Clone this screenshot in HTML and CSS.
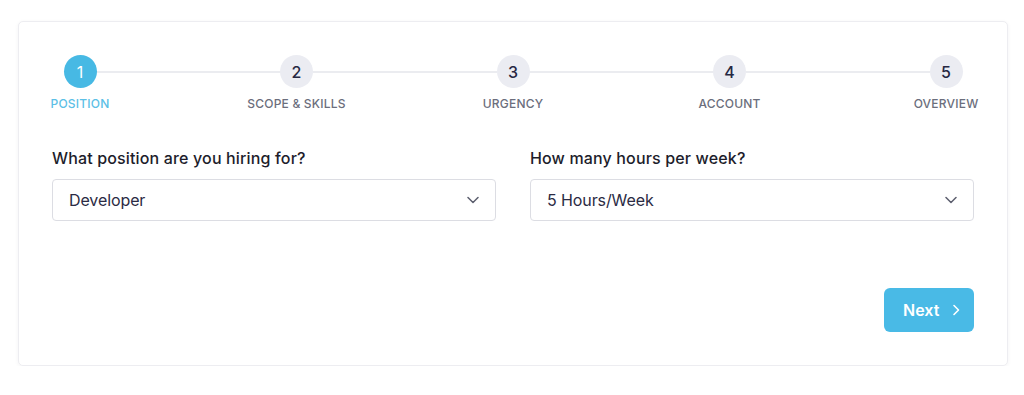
FILE: index.html
```html
<!DOCTYPE html>
<html>
<head>
<meta charset="utf-8">
<link rel="stylesheet" href="styles.css">
</head>
<body>
<div class="page">
  <div class="card">
    <div class="steps">
      <div class="step active"><div class="circle">1</div><div class="label">Position</div></div>
      <div class="connector"></div>
      <div class="step"><div class="circle">2</div><div class="label">Scope &amp; Skills</div></div>
      <div class="connector"></div>
      <div class="step"><div class="circle">3</div><div class="label">Urgency</div></div>
      <div class="connector"></div>
      <div class="step"><div class="circle">4</div><div class="label">Account</div></div>
      <div class="connector"></div>
      <div class="step"><div class="circle">5</div><div class="label">Overview</div></div>
    </div>
    <div class="form">
      <div class="field">
        <div class="field-label">What position are you hiring for?</div>
        <div class="select"><span>Developer</span>
          <svg class="chev" width="12" height="8" viewBox="0 0 12 8"><path d="M1 1.5 L6 6.5 L11 1.5" fill="none" stroke="#5c5f6e" stroke-width="1.5" stroke-linecap="round" stroke-linejoin="round"/></svg>
        </div>
      </div>
      <div class="field">
        <div class="field-label">How many hours per week?</div>
        <div class="select"><span>5 Hours/Week</span>
          <svg class="chev" width="12" height="8" viewBox="0 0 12 8"><path d="M1 1.5 L6 6.5 L11 1.5" fill="none" stroke="#5c5f6e" stroke-width="1.5" stroke-linecap="round" stroke-linejoin="round"/></svg>
        </div>
      </div>
    </div>
    <div class="actions">
      <button class="next">Next
        <svg width="8" height="12" viewBox="0 0 8 12"><path d="M2 1.5 L6.5 6 L2 10.5" fill="none" stroke="#ffffff" stroke-width="1.6" stroke-linecap="round" stroke-linejoin="round"/></svg>
      </button>
    </div>
  </div>
</div>
</body>
</html>
```
FILE: styles.css
```css
html, body {
  margin: 0;
  padding: 0;
  background: #ffffff;
  font-family: Inter, "Noto Sans", "Liberation Sans", sans-serif;
}
.page {
  padding: 21px 16px 0 18px;
}
.card {
  box-sizing: border-box;
  width: 990px;
  border: 1px solid #ededf1;
  border-radius: 5px;
  box-shadow: 0 1px 4px rgba(30, 30, 60, 0.05);
  background: #fff;
  padding: 33px 33px 33px 33px;
}
.steps {
  display: flex;
  align-items: flex-start;
}
.step {
  width: 56px;
  flex: none;
  display: flex;
  flex-direction: column;
  align-items: center;
}
.connector {
  flex: 1;
  height: 2px;
  margin-top: 15.5px;
  background: #ebecf0;
  margin-left: -12px;
  margin-right: -12px;
}
.circle {
  width: 33px;
  height: 33px;
  border-radius: 50%;
  background: #ebecf2;
  color: #262843;
  font-size: 16px;
  font-weight: 500;
  display: flex;
  align-items: center;
  justify-content: center;
  position: relative;
  z-index: 1;
}
.step.active .circle {
  background: #47b9e4;
  color: #ffffff;
  font-weight: 400;
}
.label {
  margin-top: 8px;
  white-space: nowrap;
  text-transform: uppercase;
  font-size: 12px;
  line-height: 15px;
  font-weight: 500;
  color: #6b6e7c;
  letter-spacing: 0.2px;
}
.step.active .label {
  color: #5cc0e6;
}
.form {
  margin-top: 37px;
  display: flex;
  gap: 34px;
}
.field {
  flex: 1;
}
.field-label {
  font-size: 16px;
  line-height: 20px;
  font-weight: 500;
  color: #1d1d2b;
  letter-spacing: 0.15px;
}
.select {
  margin-top: 11px;
  box-sizing: border-box;
  height: 42px;
  border: 1px solid #dcdde3;
  border-radius: 4px;
  display: flex;
  align-items: center;
  justify-content: space-between;
  padding: 0 16px 0 16px;
  font-size: 16px;
  color: #2b2b44;
  letter-spacing: -0.1px;
}
.chev {
  display: block;
}
.actions {
  margin-top: 67px;
  display: flex;
  justify-content: flex-end;
}
.next {
  box-sizing: border-box;
  width: 90px;
  height: 44px;
  border: none;
  border-radius: 6px;
  background: #49bae6;
  color: #ffffff;
  font-family: Inter, "Noto Sans", "Liberation Sans", sans-serif;
  font-size: 16px;
  font-weight: 600;
  display: flex;
  align-items: center;
  justify-content: flex-start;
  gap: 13px;
  padding: 0 0 0 19px;
}
.next svg {
  display: block;
}
```
